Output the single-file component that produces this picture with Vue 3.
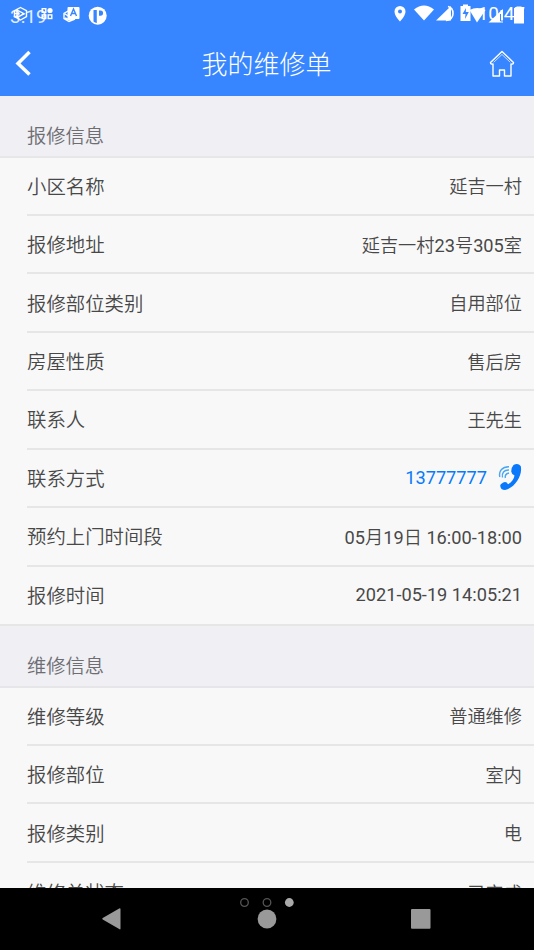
<script setup>
const repair = [
  { label: '小区名称', value: '延吉一村' },
  { label: '报修地址', value: '延吉一村23号305室' },
  { label: '报修部位类别', value: '自用部位' },
  { label: '房屋性质', value: '售后房' },
  { label: '联系人', value: '王先生' },
  { label: '联系方式', value: '13777777', phone: true },
  { label: '预约上门时间段', value: '05月19日 16:00-18:00' },
  { label: '报修时间', value: '2021-05-19 14:05:21' },
]
const service = [
  { label: '维修等级', value: '普通维修' },
  { label: '报修部位', value: '室内' },
  { label: '报修类别', value: '电' },
  { label: '维修单状态', value: '已完成' },
]
const sections = [
  { title: '报修信息', rows: repair },
  { title: '维修信息', rows: service },
]
// Digits use a slightly heavier weight than the Chinese text around them.
const parts = (value) => value.split(/([\d:\- ]+)/).filter(Boolean)
const isNumeric = (part) => /^[\d:\- ]+$/.test(part)
</script>

<template>
  <div class="screen">
    <header class="header">
      <div class="status">
        <span class="clock left">3:19</span>
        <span class="clock right">10:47</span>
        <svg class="status-icons" width="534" height="32" viewBox="0 0 534 32" fill="#fff">
          <g fill="none" stroke="#fff" stroke-width="1.4">
            <path d="M20.500 7.500l6 3.200v6l-6 3.300-6-3.300v-6z M17 10l7 3.700-7 3.800z M14.500 13.500h5" />
            <rect x="42.200" y="8.700" width="3.600" height="3.600" />
            <rect x="42.200" y="14.900" width="3.600" height="3.600" />
            <rect x="48.200" y="14.900" width="3.600" height="3.600" />
            <path d="M69 10.500l-5 3v5l5 3 6-2.500M65 14l5 3 5-2M65 18l5 2 5-3" />
          </g>
          <circle cx="50" cy="10.500" r="2.600" />
          <rect x="67.500" y="7" width="12" height="12" rx="1" />
          <path d="M70.500 16l3-7 3 7M71.500 13.500h4" fill="none" stroke="#3886ff" stroke-width="1.400" />
          <circle cx="97.700" cy="15.700" r="9" />
          <path d="M93.500 10h3.300v13a8 8 0 0 1-3.300-1.500z" fill="#3886ff" />
          <path d="M99 10.500h1.500a2.600 2.600 0 0 1 0 5.200H99z" fill="#3886ff" />
          <path fill-rule="evenodd" d="M400 6a5.500 5.500 0 0 0-5.500 5.500C394.500 16 400 21.500 400 21.500s5.500-5.500 5.500-10A5.500 5.500 0 0 0 400 6zm0 3.500a2 2 0 1 1 0 4 2 2 0 0 1 0-4z" />
          <path d="M414 9.500q10-8 20 0L424 20.500z" />
          <path d="M436 20.500L451 6v14.500z" />
          <path d="M446 20.500q7-1 7-7t-5-7" fill="none" stroke="#fff" stroke-width="1.600" />
          <path d="M460.500 6h2.500V4.500h5V6h2.500v15h-10z" />
          <path d="M466 8l-3.500 6h3l-.5 5 3.800-7h-3z" fill="#3886ff" />
          <path d="M469.500 10q7.500-4 16 0L477 22.500z" />
          <path d="M488.500 22.500L503 9v13.500z" />
          <path d="M500.500 14v7h3" fill="none" stroke="#3886ff" stroke-width="1" />
          <path d="M514 8h2.500V6.500h5V8h2.500v15.500h-10z" />
        </svg>
      </div>
      <div class="titlebar">
        <svg width="60" height="60" viewBox="0 0 60 60">
          <path d="M31.500 16L20 27.500 31.500 38.500" fill="none" stroke="#fff" stroke-width="3.500" />
        </svg>
        <h1>我的维修单</h1>
        <svg width="60" height="60" viewBox="0 0 60 60" fill="none" stroke="#fff" stroke-linejoin="round" stroke-linecap="round">
          <path d="M28 15.500L16.500 26.500q0 2 2.500 1.500v12h6.500v-6h5v6H37V28q2.500.5 2.500-1.500z" stroke-width="1.400" />
          <path d="M20 26l8-7.500 8 7.500" stroke-width=".7" />
        </svg>
      </div>
    </header>

    <main class="content">
      <section v-for="s in sections" :key="s.title">
        <h2>{{ s.title }}</h2>
        <div class="rows">
          <div v-for="r in s.rows" :key="r.label" class="row">
            <span class="label">{{ r.label }}</span>
            <span class="value" :class="{ phone: r.phone }">
              <span class="text"><span v-for="(p, i) in parts(r.value)" :key="i" :class="{ num: isNumeric(p) }">{{ p }}</span></span>
              <svg v-if="r.phone" width="24" height="28" viewBox="0 0 24 28">
                <path d="M15.500 2Q20-.3 22.700 3C25 12 17 25 7 27Q2.500 27 2.200 22.500q.8-2.500 4.800-3.500 2 0 3 2.200c4-2.200 6-5.200 6.500-8.700q-2.800-1-3.300-4 0-4 2.300-6.500z" fill="#0a78fa" />
                <path d="M1.800 14C.5 8 4.500 3.500 11 3.700M4.500 14.500C3.500 10 6 6.800 11 7M7.300 15q-.8-4 3.700-5" fill="none" stroke="#4aa6ef" stroke-width="1.400" />
              </svg>
            </span>
          </div>
        </div>
      </section>
    </main>

    <nav class="navbar">
      <svg width="534" height="62" viewBox="0 0 534 62">
        <g fill="none" stroke="#555" stroke-width="1.300">
          <circle cx="244.500" cy="14.500" r="3.800" />
          <circle cx="267" cy="14.500" r="3.800" />
        </g>
        <circle cx="289.300" cy="14.500" r="4.400" fill="#aaa" />
        <g fill="#999">
          <path d="M119.200 20.500q1.300-.7 1.300.7v19.200q0 1.500-1.300.7L102.700 31.500q-1-.7 0-1.400z" />
          <circle cx="267" cy="31" r="9.400" />
          <rect x="411" y="21" width="19.500" height="19.800" rx="1" />
        </g>
      </svg>
    </nav>
  </div>
</template>

<style>
body {
  margin: 0;
  overflow: hidden;
}
</style>

<style scoped>
.screen {
  width: 534px;
  height: 950px;
  display: flex;
  flex-direction: column;
  overflow: hidden;
  background: #f8f8f8;
  font-family: Roboto, "Noto Sans CJK SC", sans-serif;
}
svg {
  display: block;
  flex: none;
}
.header {
  flex: none;
  height: 96px;
  background: #3886ff;
  color: #fff;
}
.status {
  position: relative;
  height: 32px;
  display: flex;
  justify-content: space-between;
  padding: 0 9px 0 10px;
  font-size: 19px;
  line-height: 33px;
}
.clock.left {
  opacity: 0.85;
}
.clock.right {
  line-height: 28px;
}
.status-icons {
  position: absolute;
  left: 0;
  top: 0;
}
.titlebar {
  display: flex;
  align-items: center;
  justify-content: space-between;
  height: 64px;
}
.titlebar svg {
  margin-top: 4px;
  margin-left: -2px;
}
h1 {
  margin: 0;
  padding: 2px 1px 0 0;
  font-size: 26px;
  font-weight: 300;
  line-height: 64px;
}
.content {
  flex: 1;
  min-height: 0;
  overflow: hidden;
}
h2 {
  box-sizing: border-box;
  height: 61.500px;
  margin: 0;
  padding: 18px 0 0 27px;
  border-bottom: 2px solid #e6e6e8;
  background: #efeff4;
  color: #6d6d72;
  font-size: 19.300px;
  font-weight: 350;
  line-height: 45px;
}
.rows {
  padding-left: 27px;
}
.row {
  box-sizing: border-box;
  height: 58.450px;
  display: flex;
  align-items: center;
  justify-content: space-between;
  padding: 0 12px 1px 0;
  border-bottom: 2px solid #e6e6e6;
  color: #484848;
  font-size: 19.400px;
}
section:first-child .row:last-child {
  height: 59.500px;
  margin-left: -27px;
  padding-left: 27px;
}
section:last-child .row:last-child {
  padding-top: 2px;
}
.label {
  font-weight: 350;
}
.value {
  display: flex;
  align-items: center;
  gap: 11px;
  font-size: 18.200px;
  font-weight: 350;
}
.text {
  white-space: pre;
}
.num {
  font-weight: 400;
}
.value.phone {
  color: #087bfa;
}
.value.phone .text {
  padding-top: 1px;
}
.navbar {
  flex: none;
  height: 62px;
  background: #000;
}
</style>
